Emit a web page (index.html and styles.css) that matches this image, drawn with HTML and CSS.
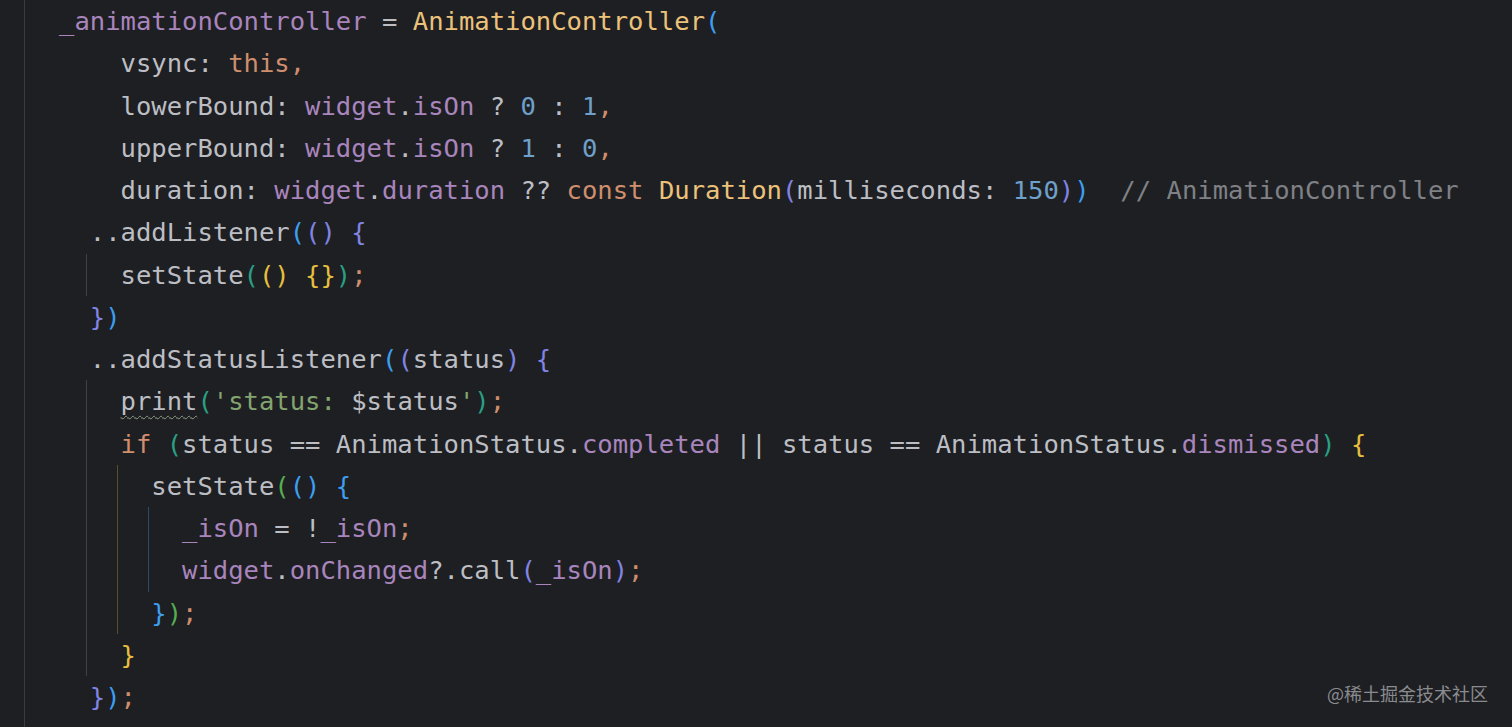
FILE: index.html
```html
<!DOCTYPE html>
<html lang="en">
<head>
<meta charset="utf-8">
<title>AnimationController</title>
<link rel="stylesheet" href="styles.css">
</head>
<body>
<div class="editor">
  <div class="outer">
    <div class="ln"><span class="f">_animationController</span> = <span class="c">AnimationController</span><span class="b1">(</span></div>
    <div class="ln">    vsync: <span class="k">this</span><span class="p">,</span></div>
    <div class="ln">    lowerBound: <span class="f">widget</span>.<span class="f">isOn</span> ? <span class="n">0</span> : <span class="n">1</span><span class="p">,</span></div>
    <div class="ln">    upperBound: <span class="f">widget</span>.<span class="f">isOn</span> ? <span class="n">1</span> : <span class="n">0</span><span class="p">,</span></div>
    <div class="ln">    duration: <span class="f">widget</span>.<span class="f">duration</span> ?? <span class="k">const</span> <span class="c">Duration</span><span class="b2">(</span>milliseconds: <span class="n">150</span><span class="b2">)</span><span class="b1">)</span>  <span class="cm">// AnimationController</span></div>
    <div class="ln">  ..addListener<span class="b1">(</span><span class="b2">()</span> <span class="b2">{</span></div>
    <div class="blk g-grey">
      <div class="ln">setState<span class="b3">(</span><span class="b4">()</span> <span class="b4">{}</span><span class="b3">)</span><span class="p">;</span></div>
    </div>
    <div class="ln">  <span class="b2">}</span><span class="b1">)</span></div>
    <div class="ln">  ..addStatusListener<span class="b1">(</span><span class="b2">(</span>status<span class="b2">)</span> <span class="b2">{</span></div>
    <div class="blk g-grey">
      <div class="ln"><span class="warn">print</span><span class="b3">(</span><span class="s">'status: </span>$status<span class="s">'</span><span class="b3">)</span><span class="p">;</span></div>
      <div class="ln"><span class="k">if</span> <span class="b3">(</span>status == AnimationStatus.<span class="f">completed</span> || status == AnimationStatus.<span class="f">dismissed</span><span class="b3">)</span> <span class="b4">{</span></div>
      <div class="blk2 g-gold">
        <div class="ln">setState<span class="b5">(</span><span class="b1">()</span> <span class="b1">{</span></div>
        <div class="blk2 g-blue">
          <div class="ln"><span class="f">_isOn</span> = !<span class="f">_isOn</span><span class="p">;</span></div>
          <div class="ln"><span class="f">widget</span>.<span class="f">onChanged</span>?.call<span class="b2">(</span><span class="f">_isOn</span><span class="b2">)</span><span class="p">;</span></div>
        </div>
        <div class="ln"><span class="b1">}</span><span class="b5">)</span><span class="p">;</span></div>
      </div>
      <div class="ln"><span class="b4">}</span></div>
    </div>
    <div class="ln">  <span class="b2">}</span><span class="b1">)</span><span class="p">;</span></div>
  </div>
</div>
<div class="watermark">@稀土掘金技术社区</div>
</body>
</html>
```
FILE: styles.css
```css
html, body {
  margin: 0;
  padding: 0;
  background: #1e1f22;
  width: 1512px;
  height: 727px;
  overflow: hidden;
}

.editor {
  height: 727px;
  padding-left: 24px;
  box-sizing: border-box;
  font-family: "DejaVu Sans Mono", "Liberation Mono", monospace;
  font-size: 25.55px;
  color: #bcbec4;
}

.outer {
  height: 100%;
  border-left: 1px solid #393b40;
  padding-left: 34px;
}

.ln {
  white-space: pre;
  height: 42.25px;
  line-height: 42.25px;
}

.blk {
  margin-left: calc(2ch - 3.5px);
  padding-left: calc(2ch + 2.5px);
  border-left: 1px solid #3f4147;
}

.blk2 {
  margin-left: -3.5px;
  padding-left: calc(2ch + 2.5px);
  border-left: 1px solid #3f4147;
}

.g-grey { border-left-color: #3f4147; }
.g-gold { border-left-color: #5a4c2c; }
.g-blue { border-left-color: #2c4a6a; }

.f { color: #a985bd; }
.c { color: #ecc27b; }
.k { color: #cf8e6d; }
.p { color: #cf8e6d; }
.n { color: #6fa0c9; }
.s { color: #84a46f; }
.cm { color: #7f8186; }

.b1 { color: #3d9ef0; }
.b2 { color: #8184e2; }
.b3 { color: #2a9f84; }
.b4 { color: #e6bf3f; }
.b5 { color: #56ad52; }

.warn {
  text-decoration: underline wavy #93a087;
  text-decoration-thickness: 1px;
  text-underline-offset: 5px;
}

.watermark {
  position: absolute;
  right: 24px;
  top: 680px;
  font-family: "Noto Sans CJK SC", "Noto Sans", sans-serif;
  font-size: 18px;
  line-height: 26px;
  color: #8a8b8f;
}
```
